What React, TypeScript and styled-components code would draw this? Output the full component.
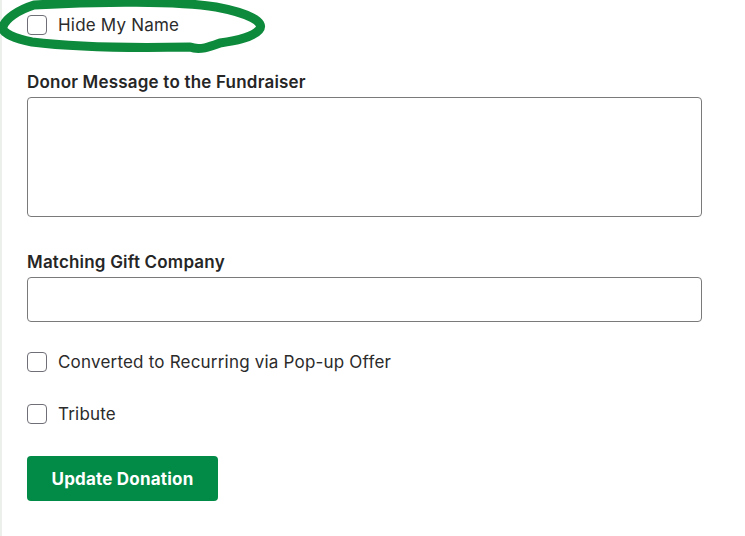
import styled, { createGlobalStyle } from 'styled-components';

const GlobalStyle = createGlobalStyle`
  html, body {
    margin: 0;
    padding: 0;
    background: #ffffff;
  }
  body {
    font-family: Inter, "Noto Sans", "Liberation Sans", sans-serif;
    color: #2b2b2b;
  }
`;

const Page = styled.div`
  display: flex;
  min-height: 536px;
`;

const Strip = styled.div`
  width: 2px;
  flex-shrink: 0;
  background: #ebf0eb;
`;

const Form = styled.form`
  display: flex;
  flex-direction: column;
  padding: 13px 0 0 25px;
  width: 675px;
`;

const CheckRow = styled.label<{ $mt?: number }>`
  position: relative;
  display: flex;
  align-items: center;
  gap: 11px;
  height: 24px;
  margin-top: ${(p) => p.$mt ?? 0}px;
  font-size: 17px;
  letter-spacing: 0.2px;
  color: #2b2b2b;
  cursor: pointer;
`;

const Box = styled.input`
  appearance: none;
  margin: 0;
  width: 20px;
  height: 20px;
  border: 1.5px solid #6f6f78;
  border-radius: 4px;
  background: #fff;
  box-sizing: border-box;
`;

const Scribble = styled.svg`
  position: absolute;
  left: -27px;
  top: -13px;
  width: 270px;
  height: 60px;
  pointer-events: none;
  overflow: visible;
`;

const FieldLabel = styled.div<{ $mt: number }>`
  margin-top: ${(p) => p.$mt}px;
  font-size: 17px;
  font-weight: 600;
  line-height: 24px;
  letter-spacing: 0.2px;
  color: #262626;
`;

const TextArea = styled.textarea`
  margin-top: 3px;
  height: 120px;
  box-sizing: border-box;
  border: 1px solid #7a7a7a;
  border-radius: 4px;
  resize: none;
  font: inherit;
`;

const TextInput = styled.input`
  margin-top: 3px;
  height: 45px;
  box-sizing: border-box;
  border: 1px solid #7a7a7a;
  border-radius: 4px;
  font: inherit;
`;

const Button = styled.button`
  align-self: flex-start;
  margin-top: 30px;
  width: 191px;
  height: 45px;
  border: none;
  border-radius: 4px;
  background: #028a47;
  color: #ffffff;
  font-family: inherit;
  font-size: 17px;
  font-weight: 700;
  letter-spacing: 0.2px;
  cursor: pointer;
`;

const App = () => {
  return (
    <>
      <GlobalStyle />
      <Page>
        <Strip />
        <Form onSubmit={(e) => e.preventDefault()}>
          <CheckRow>
            <Box type="checkbox" />
            <span>Hide My Name</span>
            <Scribble viewBox="0 0 270 60">
              <path
                d="M 34 5 C 100 1, 180 1, 216 7 C 248 13, 266 22, 259 30 C 252 38, 234 41, 220 43 C 212 46, 200 51, 190 47 C 140 48, 80 48, 32 42 C 16 39, 1 33, 3 27 C 5 19, 18 10, 34 5 Z"
                fill="none"
                stroke="#0d8a3c"
                strokeWidth="9"
                strokeLinejoin="round"
                strokeLinecap="round"
              />
            </Scribble>
          </CheckRow>

          <FieldLabel $mt={33}>Donor Message to the Fundraiser</FieldLabel>
          <TextArea />

          <FieldLabel $mt={33}>Matching Gift Company</FieldLabel>
          <TextInput type="text" />

          <CheckRow $mt={28}>
            <Box type="checkbox" />
            <span>Converted to Recurring via Pop-up Offer</span>
          </CheckRow>

          <CheckRow $mt={28}>
            <Box type="checkbox" />
            <span>Tribute</span>
          </CheckRow>

          <Button type="submit">Update Donation</Button>
        </Form>
      </Page>
    </>
  );
};

export default App;
